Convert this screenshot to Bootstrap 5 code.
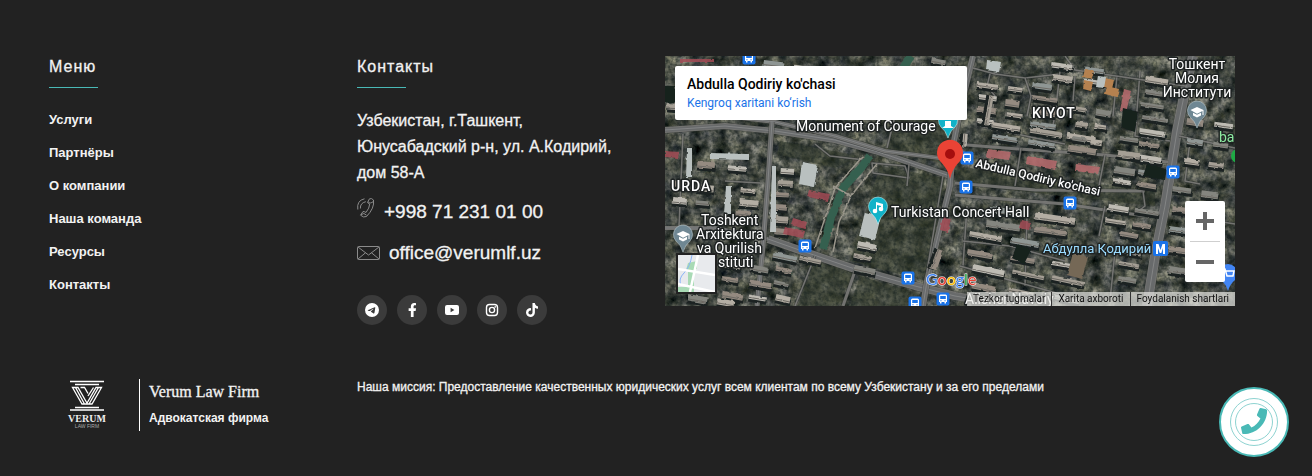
<!DOCTYPE html>
<html lang="ru">
<head>
<meta charset="utf-8">
<meta name="viewport" content="width=device-width, initial-scale=1">
<title>Verum Law Firm</title>
<link href="https://cdn.jsdelivr.net/npm/bootstrap@5.3.0/dist/css/bootstrap.min.css" rel="stylesheet">
<style>
  :root { --accent: #49b9b6; }
  body { background: #222; color: #f2f2f2; font-family: "Liberation Sans", Arial, sans-serif; }
  a { color: inherit; text-decoration: none; }
  .site-footer { padding: 56px 61px 24px 49px; }
  .site-footer .row { --bs-gutter-x: 30px; }
  .footer-title { font-size: 16px; line-height: 22px; font-weight: 500; margin: 0; padding-bottom: 10px; letter-spacing: 1px; -webkit-text-stroke: .3px; }
  .footer-title::after { content: ""; display: block; width: 49px; height: 1px; background: var(--accent); margin-top: 9px; margin-bottom: -10px; }
  .footer-menu { margin-top: 22px; }
  .footer-menu a { display: block; font-size: 13px; line-height: 20px; font-weight: 700; margin-bottom: 13px; }
  .address { font-size: 16px; line-height: 26px; margin: 20px 0 12px; }
  .contact-line { font-size: 19px; line-height: 28px; }
  .contact-line svg { fill: none; stroke: #8b8b8b; stroke-width: 1; }
  .mail-line { margin-top: 13px; }
  .social-list { gap: 10px; margin-top: 28px; }
  .social { width: 30px; height: 30px; background: #3b3b3b; }
  .social svg { fill: #fff; height: 14px; }
  .map-col { padding-right: 31px; }
  .map-box { height: 250px; background: #4b4e47; }
  .map-box, .map-box button { font-family: Roboto, sans-serif; }
  .map-art { width: 100%; height: 100%; display: block; }
  .map-card { left: 10px; top: 10px; width: 292px; padding: 8px 12px 8px; background: #fff; border-radius: 2px; color: #000; }
  .map-card h2 { font-size: 14px; line-height: 20px; font-weight: 500; margin: 0; }
  .map-card a { font-size: 12px; line-height: 18px; color: #1a73e8; display: block; }
  .map-zoom { right: 10px; bottom: 24px; width: 40px; background: #fff; border-radius: 2px; }
  .map-zoom button { display: block; width: 40px; height: 40px; border: 0; background: none; padding: 0; }
  .map-zoom hr { margin: 0 5px; color: #cfcfcf; opacity: 1; }
  .map-type { left: 11px; bottom: 12px; width: 41px; height: 41px; border: 2px solid #222; padding: 0; background: #e8eaed; overflow: hidden; }
  .map-type svg { display: block; }
  .map-legal { right: 0; bottom: 0; font-size: 10px; line-height: 14px; color: #111; background: rgba(232,232,228,.7); }
  .map-legal a { padding: 0 6px; }
  .map-legal a + a { border-left: 1px solid #333; }
  .brand-row { margin-top: 54px; }
  .brand-text { border-left: 1px solid #fff; padding-left: 9px; margin-left: 22px; height: 52px; }
  .brand-name { font: 16px/26px "Liberation Serif", serif; }
  .brand-sub { font-size: 12px; line-height: 26px; font-weight: 700; }
  .mission { font-size: 12px; line-height: 16px; }
  .thin-bold { -webkit-text-stroke: .3px; }
  .call-btn { right: 23px; bottom: 19px; width: 70px; height: 70px; border: 0; padding: 0; background: none; }
</style>
</head>
<body>
<footer class="site-footer container-fluid">
  <div class="row">
    <nav class="col-3" aria-label="Меню">
      <h2 class="footer-title">Меню</h2>
      <div class="footer-menu">
        <a href="#">Услуги</a><a href="#">Партнёры</a><a href="#">О компании</a><a href="#">Наша команда</a><a href="#">Ресурсы</a><a href="#">Контакты</a>
      </div>
    </nav>
    <div class="col-3">
      <h2 class="footer-title">Контакты</h2>
      <p class="address thin-bold">Узбекистан, г.Ташкент,<br>Юнусабадский р-н, ул. А.Кодирий,<br>дом 58-А</p>
      <a class="contact-line thin-bold d-flex" href="tel:+998712310100">
        <svg class="me-2" width="19" height="20" viewBox="0 0 19 20"><path d="M12.500 .8Q14.500 -.2 16.500 2Q17.800 10 9.500 18.500Q6.500 20 3.500 17.200L6 13.500Q8 13.600 9 14.500Q12.500 10 12.700 6Q11 5.500 10.500 4.500ZM11 3.700Q13 6.500 16.700 3.200M4 16.700Q7 14 9.500 17.200M.8 11.500Q-.5 2.500 7.500 .8M3.400 10.500Q3 5 8.800 3.700"/></svg>
        <span>+998 71 231 01 00</span>
      </a>
      <a class="contact-line mail-line thin-bold d-flex align-items-center" href="mailto:office@verumlf.uz">
        <svg class="me-2" width="24" height="15" viewBox="0 0 24 15"><rect x=".5" y=".5" width="22" height="13" rx="1"/><path d="M1 1L11.500 9L22 1M1 13L8.500 6.800M22 13L14.500 6.800"/></svg>
        <span>office@verumlf.uz</span>
      </a>
      <div class="d-flex social-list">
        <a class="social rounded-circle d-flex align-items-center justify-content-center" href="#" aria-label="Telegram"><svg viewBox="0 0 16 16"><path d="M16 8A8 8 0 1 1 0 8a8 8 0 0 1 16 0zM8.287 5.906c-.778.324-2.334.994-4.666 2.010-.378.150-.577.298-.595.442-.03.243.275.339.69.470l.175.055c.408.133.958.288 1.243.294.260.006.549-.1.868-.32 2.179-1.471 3.304-2.214 3.374-2.230.05-.012.12-.026.166.016.047.041.042.120.037.141-.03.129-1.227 1.241-1.846 1.817-.193.180-.33.307-.358.336a8 8 0 0 1-.188.186c-.38.366-.664.640.015 1.088.327.216.589.393.850.571.284.194.568.387.936.629.093.060.183.125.270.187.331.236.630.448.997.414.214-.02.435-.22.547-.82.265-1.417.786-4.486.906-5.751a1.400 1.400 0 0 0-.013-.315.337.337 0 0 0-.114-.217.526.526 0 0 0-.31-.093c-.3.005-.763.166-2.984 1.090z"/></svg></a>
        <a class="social rounded-circle d-flex align-items-center justify-content-center" href="#" aria-label="Facebook"><svg viewBox="0 0 320 512"><path d="M279.140 288l14.220-92.660h-88.910v-60.130c0-25.350 12.420-50.060 52.240-50.060h40.420V6.260S260.430 0 225.360 0c-73.220 0-121.080 44.380-121.080 124.720v70.620H22.890V288h81.390v224h100.170V288z"/></svg></a>
        <a class="social rounded-circle d-flex align-items-center justify-content-center" href="#" aria-label="YouTube"><svg viewBox="0 0 16 14"><path fill-rule="evenodd" d="M3 2H13Q15 2 15 4V10Q15 12 13 12H3Q1 12 1 10V4Q1 2 3 2ZM6.600 4.800V9.200L10.400 7Z"/></svg></a>
        <a class="social rounded-circle d-flex align-items-center justify-content-center" href="#" aria-label="Instagram"><svg viewBox="0 0 14 14"><g fill="none" stroke="#fff" stroke-width="1.400"><rect x="1.500" y="1.500" width="11" height="11" rx="3"/><circle cx="7" cy="7" r="2.600"/></g><circle cx="10.200" cy="3.900" r=".8"/></svg></a>
        <a class="social rounded-circle d-flex align-items-center justify-content-center" href="#" aria-label="TikTok"><svg viewBox="0 0 448 512"><path d="M448,209.910a210.060,210.060,0,0,1-122.770-39.250V349.380A162.550,162.550,0,1,1,185,188.310V278.200a74.620,74.620,0,1,0,52.230,71.180V0l88,0a121.180,121.180,0,0,0,1.860,22.170h0A122.180,122.180,0,0,0,381,102.390a121.430,121.430,0,0,0,67,20.140Z"/></svg></a>
      </div>
    </div>
    <div class="col-6 map-col">
      <div class="map-box position-relative overflow-hidden">
        <svg class="map-art" viewBox="0 0 570 250" preserveAspectRatio="xMinYMin slice" role="img" aria-label="Abdulla Qodiriy ko'chasi">
          <defs>
            <filter id="ground" x="0" y="0" width="100%" height="100%" color-interpolation-filters="sRGB">
              <feTurbulence type="fractalNoise" baseFrequency=".08" numOctaves="5" seed="8"/>
              <feColorMatrix values=".8 .25 0 0 -.22  .75 .25 0 0 -.18  .65 .25 .1 0 -.21  0 0 0 0 1"/>
            </filter>
            <filter id="grain" x="0" y="0" width="100%" height="100%" color-interpolation-filters="sRGB">
              <feTurbulence type="fractalNoise" baseFrequency=".28" numOctaves="2" seed="3"/>
              <feColorMatrix values="0 0 0 0 .1  0 0 0 0 .14  0 0 0 0 .13  1.600 0 0 0 -.66"/>
            </filter>
            <filter id="rough" x="0" y="0" width="100%" height="100%"><feTurbulence type="fractalNoise" baseFrequency=".2" numOctaves="1"/><feDisplacementMap in="SourceGraphic" scale="3" xChannelSelector="R" yChannelSelector="G"/></filter>
            <g id="bus"><rect x="-6.500" y="-6.500" width="13" height="13" rx="2" fill="#1a73e8"/><path fill="#fff" fill-rule="evenodd" d="M-4 -3Q-4 -4.500 -2.500 -4.500H2.500Q4 -4.500 4 -3V3H3V4.500H1.500V3H-1.500V4.500H-3V3H-4ZM-2.800 -3V0H2.800V-3ZM-2.600 1.200V2.200H-1.500V1.200ZM1.500 1.200V2.200H2.600V1.200Z"/></g>
            <path id="pin" d="M0 16Q-2 9 -7 5A9.500 9.500 0 1 1 7 5Q2 9 0 16Z"/>
            <path id="cap" fill="#fff" d="M-6.500 -3L0 -6L6.500 -3V2H5.500V-2L0 .7ZM-4 -.3L0 1.800L4 -.3V2.500L0 4.500L-4 2.500Z"/>
          </defs>
          <rect width="570" height="250" filter="url(#ground)"/>
          <g fill="#39402f" opacity=".55"><path d="M215 110L280 122L262 225L185 205ZM150 205L190 217L172 250H132ZM195 220L255 238V250H185ZM290 110L490 135V150L290 128ZM115 85L195 100L170 112L112 98ZM225 62H280V108L222 94Z"/></g>
          <rect width="570" height="250" filter="url(#grain)"/>
          <g id="roads" fill="none" stroke-linejoin="round"></g>
          <g filter="url(#rough)">
            <g fill="none" stroke-linejoin="round">
              <path stroke="#35604f" stroke-width="8" d="M205 100L196 112L178 132L166 162L158 193M246 0L238 12"/>
              <path stroke="#9a968b" stroke-width="1.500" d="M198 100L170 132L150 192M212 108L200 122L186 140L174 166L168 196M168 130L186 140"/>
            </g>
            <g id="buildings"></g>
            <path fill="#a34c56" opacity=".85" d="M144 134l21 4-2 7-21-4zM128 162l14 4-2 7-14-4zM120 171l20 4-2 7-20-4zM278 160l8 2-3 14-8-2zM0 95l14 1-1 6-13-1zM15 3h34v3h-34zM356 164l10 2-2 8-10-2z"/>
            <path fill="#b36a6c" opacity=".9" d="M322 93l24 3-2 8-23-3zM362 100l30 5-2 9-29-6zM411 108l24 3-2 7-23-3zM459 33l7 2-5 22-6-2z"/>
            <path fill="#b5814f" d="M420 13l9 2-2 8-9-2zM419 24l9 2-2 9-8-2zM440 22l9 2-2 9-8-2zM442 30l12 3-2 8-12-3z"/>
            <path fill="#756757" d="M408 197l15 4-6 22-15-4z"/>
            <path fill="#b9c0bf" d="M200 156l16 4-6 24-16-4zM137 106l16 3-4 22-15-3zM22 92h5v30h-6zM45 97l39 1v6l-39-1zM61 130h5v28h-7zM107 110h4v66h-6zM322 4l14 2-2 10-13-2zM433 20l8 1-2 11-8-1z"/>
            <path fill="#17201f" d="M482 108l20 4-2 12-22-4zM458 52l15 4-3 20-14-4zM352 188l14 6-7 14-12-6zM0 30h10v16h-10z"/>
          </g>
          <g font-size="14" font-weight="400" fill="#fff" stroke="#1e2222" stroke-width="3" stroke-linejoin="round" paint-order="stroke">
            <text x="131" y="75">Monument of Courage</text>
            <text x="226" y="161">Turkistan Concert Hall</text>
            <text x="36" y="169">Toshkent</text><text x="31" y="183">Arxitektura</text><text x="32" y="197">va Qurilish</text><text x="53" y="211">stituti</text>
            <g text-anchor="middle"><text x="532" y="13">Тошкент</text><text x="532" y="27">Молия</text><text x="532" y="41">Институти</text></g>
            <text x="300" y="248">Alisher Navoiy</text>
            <g font-weight="500"><text x="367" y="62" letter-spacing="1">KIYOT</text><text x="6" y="135" letter-spacing="1">URDA</text></g>
            <text font-size="12" font-weight="500" transform="translate(310 111) rotate(13)">Abdulla Qodiriy ko'chasi</text>
            <text x="378" y="197" font-size="13" fill="#9bdcff">Абдулла Қодирий</text>
            <text x="554" y="86" fill="#8de9a0">ba</text>
          </g>
          <use href="#bus" x="84" y="2"/><use href="#bus" x="302" y="102"/><use href="#bus" x="301" y="131"/><use href="#bus" x="405" y="147"/><use href="#bus" x="508" y="116"/><use href="#bus" x="140" y="190"/><use href="#bus" x="243" y="222"/><use href="#bus" x="250" y="247"/><use href="#bus" x="278" y="243"/>
          <rect x="488" y="185" width="15" height="15" rx="2" fill="#1a73e8"/><path fill="#fff" d="M491 198v-10h2.500l2 6 2-6h2.500v10h-2v-6l-1.700 5h-1.600l-1.700-5v6z"/>
          <g fill="#11b2c8" stroke="#b7eef3" stroke-width=".6"><use href="#pin" x="213" y="152"/><use href="#pin" x="283" y="66"/></g>
          <g fill="#fff"><circle cx="210" cy="155" r="2.300"/><circle cx="216" cy="153" r="2.300"/><path d="M211 146l7 2v5h-2v-3l-4-1v6h-1zM277 72l3-2v-5h6v5l3 2z"/></g>
          <g fill="#6f8793" stroke="#b8c8cd" stroke-width=".6"><use href="#pin" x="18" y="180"/><use href="#pin" x="532" y="56"/></g>
          <use href="#cap" x="18" y="181"/><use href="#cap" x="532" y="57"/>
          <circle cx="573" cy="100" r="7" fill="#1faa45"/>
          <use href="#pin" x="563" y="219" fill="#4285f4"/><path fill="none" stroke="#fff" stroke-width="1.500" d="M557 213h3l2 7h6l1-5h-8"/>
          <path fill="#ea4335" d="M285 123Q283 113 275 105A13 13 0 1 1 295 105Q287 113 285 123Z"/><circle cx="285" cy="98" r="5" fill="#a50e0e"/>
          <text x="261" y="229" font-size="16" font-weight="500" stroke="#fff" stroke-width="1" paint-order="stroke" font-family="Lato, sans-serif"><tspan fill="#4285f4">G</tspan><tspan fill="#ea4335">o</tspan><tspan fill="#fbbc04">o</tspan><tspan fill="#4285f4">g</tspan><tspan fill="#34a853">l</tspan><tspan fill="#ea4335">e</tspan></text>
        </svg>
        <div class="map-card position-absolute"><h2>Abdulla Qodiriy ko'chasi</h2><a href="#">Kengroq xaritani ko‘rish</a></div>
        <button class="map-type position-absolute" aria-label="Xarita"><svg width="37" height="37" viewBox="0 0 37 37"><path fill="#e8eaed" d="M0 0h37v37H0z"/><path fill="#a8dab5" d="M10 8l9-2v8h-3v23H0v-5h10V15H8z"/><path fill="none" stroke="#8ab4f8" d="M14 0Q12 12 6 18T3 30"/><path fill="none" stroke="#fff" stroke-width="2.500" d="M0 14L37 20M0 29L37 37M20 0L12 37"/></svg></button>
        <div class="map-zoom position-absolute">
          <button aria-label="+"><svg width="40" height="40"><path stroke="#666" stroke-width="4" d="M11 20h18M20 11v18"/></svg></button><hr>
          <button aria-label="−"><svg width="40" height="40"><path stroke="#666" stroke-width="4" d="M11 20h18"/></svg></button>
        </div>
        <div class="map-legal position-absolute d-flex"><a href="#">Tezkor tugmalar</a><a href="#">Xarita axboroti</a><a href="#">Foydalanish shartlari</a></div>
      </div>
    </div>
  </div>
  <div class="row brand-row">
    <div class="col-3 d-flex">
      <svg width="68" height="52" viewBox="0 0 68 52" aria-label="Verum Law Firm" role="img">
        <path stroke="#fff" stroke-width="1.500" d="M21 2.500h34M26 5.500h24M26 28.500h24M21 31h34"/>
        <path fill="none" stroke="#fff" stroke-width="1.300" d="M23.500 8.500h5.500L38.500 25H33ZM26.500 8.500L35.500 25M31.500 8.500h4l3.500 6M52.500 8.500h-5.500L37.500 25H43ZM49.500 8.500L40 25M44.500 8.500L39 17"/>
        <text x="38" y="43" text-anchor="middle" font-family="Liberation Serif, serif" font-weight="700" font-size="10" fill="#eee">VERUM</text>
        <text x="38" y="49" text-anchor="middle" font-family="Liberation Sans, sans-serif" font-size="5" fill="#aaa">LAW FIRM</text>
      </svg>
      <div class="brand-text"><div class="brand-name thin-bold">Verum Law Firm</div><div class="brand-sub">Адвокатская фирма</div></div>
    </div>
    <div class="col-9"><p class="mission thin-bold m-0">Наша миссия: Предоставление качественных юридических услуг всем клиентам по всему Узбекистану и за его пределами</p></div>
  </div>
</footer>
<button class="call-btn position-fixed" aria-label="Позвонить">
  <svg width="70" height="70" viewBox="0 0 70 70"><circle cx="35" cy="35" r="34" fill="#fff" stroke="#49b9b6" stroke-width="2"/><g fill="none" stroke="#8ed3d1"><circle cx="35" cy="35" r="23.500"/><circle cx="35" cy="35" r="18.500"/></g><path fill="#49b9b6" transform="translate(22 21) scale(.051)" d="M493.400 24.600l-104-24c-11.300-2.600-22.900 3.300-27.500 13.900l-48 112c-4.200 9.800-1.400 21.300 6.900 28l60.600 49.600c-36 76.700-98.900 140.500-177.200 177.200l-49.600-60.600c-6.800-8.300-18.200-11.100-28-6.900l-112 48C3.900 366.500-2 378.100.6 389.400l24 104C27.100 504.200 36.700 512 48 512c256.100 0 464-207.500 464-464 0-11.200-7.700-20.900-18.600-23.400z"/></svg>
</button>
<script src="https://cdn.jsdelivr.net/npm/bootstrap@5.3.0/dist/js/bootstrap.bundle.min.js"></script>
<script>
  // Blocks of houses: x, y, columns, rows, column step, row step, house length, angle
  const blocks = [
    [312,26,1,4,30,12,19,8],[365,26,1,4,30,13,24,8],[340,30,1,3,30,13,16,8],[325,66,3,2,38,12,30,9],
    [385,6,2,2,32,12,22,8],[408,50,2,3,20,15,14,9],[478,20,1,7,32,13,24,9],[453,80,1,2,34,14,23,8],[446,110,2,2,24,12,20,9],
    [322,150,2,2,46,14,38,8],[302,175,3,2,42,18,30,10],[305,208,3,2,40,18,30,12],[440,148,2,2,27,14,22,9],
    [455,175,1,4,26,15,22,10],[505,130,2,5,30,20,18,8],[520,62,2,3,26,20,18,8],[300,78,1,1,10,10,12,95],[325,40,1,1,10,10,30,100],
    [30,105,2,1,30,13,22,5],[112,112,1,6,22,12,14,4],[5,125,2,2,24,16,16,5],[72,132,1,3,25,11,18,5],
    [58,205,2,3,25,15,20,10],[106,196,2,1,27,18,26,12],[110,210,1,3,27,14,18,13],
    [0,47,1,1,32,14,14,4],[95,4,3,1,34,14,24,7],[265,2,1,2,20,20,16,10],[20,238,2,1,30,14,19,10],[275,195,1,1,20,20,24,110],[190,185,1,3,20,12,20,12]
  ];
  let seed = 7;
  const rnd = () => (seed = (seed * 16807) % 2147483647) / 2147483647;
  const tones = ['#a59f95','#b3ada3','#8f9694','#948a80','#bebbb3','#84857f'];
  let out = '';
  for (const [x, y, c, r, dx, dy, len, ang] of blocks)
    for (let i = 0; i < c; i++) for (let j = 0; j < r; j++) {
      const px = x + i * dx + rnd() * 4 - j, py = y + j * dy + i * dx * .14, w = len * (.8 + rnd() * .3), h = 4 + rnd() * 3;
      const t = tones[Math.floor(rnd() * tones.length)];
      out += `<g transform="translate(${px} ${py}) rotate(${ang})"><rect y="3" width="${w + 1}" height="${h}" fill="#1b2322"/><rect width="${w}" height="${h}" fill="${t}"/><rect y="${h - 2}" width="${w}" height="1" fill="#6d6a64"/></g>`;
    }
  document.getElementById('buildings').innerHTML = out;
  // Streets: width, path
  const streets = [
    [10,'M528 0L520 35L512 75L500 150L490 200L482 250'],[6,'M0 74L60 70L110 75L170 84L210 95L285 120'],[4,'M60 60L110 66L170 80L220 95L290 104'],
    [8,'M103 183L140 196L190 213L250 230L290 240L350 250'],[4,'M0 172L50 172L103 183'],[6,'M308 0L296 50L288 90L285 130L262 225L258 250'],[5,'M107 66L103 125L98 190L92 250'],
    [2,'M18 78L14 170'],[2,'M60 125L95 127'],[3,'M190 215L178 250'],[2,'M150 200L130 250'],[2,'M278 120L262 215'],
    [2,'M308 12L330 18L360 22L395 18'],[2,'M325 18L322 30L330 40L326 62'],[2,'M360 22L366 40L362 60'],[2,'M395 15L390 60L385 82'],
    [2,'M315 70L370 82L400 88'],[3,'M290 88L340 92L440 99L503 106'],[3,'M290 127L370 134L480 135'],[3,'M290 139L400 148L480 160'],
    [2,'M440 99L432 140'],[2,'M356 92L350 130'],[2,'M410 20L408 45'],[2,'M452 20L448 60'],[2,'M475 15L470 80L505 85'],
    [2,'M370 158L375 165L410 165'],[2,'M302 150L298 210'],[2,'M298 185L345 190L400 205'],[2,'M440 150L434 180'],[2,'M478 135L480 150L470 158'],
    [2,'M362 160L360 230'],[2,'M295 210L330 220L395 238'],[2,'M450 195L445 245'],[2,'M514 80L570 92'],[2,'M506 158L570 168'],[2,'M525 85L520 125L535 128'],
    [2,'M150 88L165 100L200 104'],[2,'M207 107L240 110L244 122L208 117Z'],[2,'M244 108L242 130'],[2,'M230 60L222 92'],[2,'M400 0L410 14L520 30']
  ];
  document.getElementById('roads').innerHTML = streets.map(([w, d]) =>
    `<path d="${d}" stroke="#2f3432" stroke-width="${w + 1}" opacity=".6"/><path d="${d}" stroke="#83827f" stroke-width="${w > 2 ? w : 1.5}" opacity=".8"/>` +
    (w > 3 ? `<path d="${d}" stroke="#66686a" stroke-width="${w - 2}" opacity=".85"/><path d="${d}" stroke="#8f9090" stroke-width="1" opacity=".7"/>` : '')).join('');
</script>
</body>
</html>
